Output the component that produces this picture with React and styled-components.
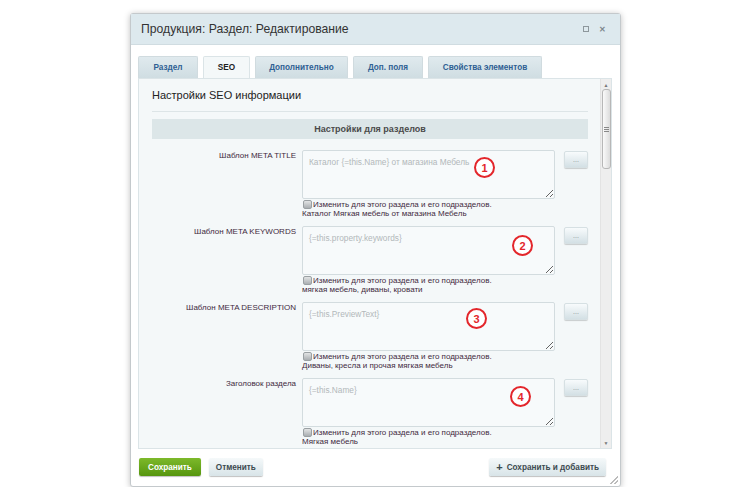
import React from "react";
import styled, { createGlobalStyle } from "styled-components";

const Global = createGlobalStyle`
  html, body { margin: 0; padding: 0; background: #fff; }
  body { font-family: "Liberation Sans", Arial, sans-serif; }
  * { box-sizing: border-box; }
`;

const rows = [
  {
    label: "Шаблон META TITLE",
    placeholder: "Каталог {=this.Name} от магазина Мебель",
    value: "Каталог Мягкая мебель от магазина Мебель",
    mark: 1, mx: 172, my: 7,
  },
  {
    label: "Шаблон META KEYWORDS",
    placeholder: "{=this.property.keywords}",
    value: "мягкая мебель, диваны, кровати",
    mark: 2, mx: 210, my: 9,
  },
  {
    label: "Шаблон META DESCRIPTION",
    placeholder: "{=this.PreviewText}",
    value: "Диваны, кресла и прочая мягкая мебель",
    mark: 3, mx: 164, my: 6,
  },
  {
    label: "Заголовок раздела",
    placeholder: "{=this.Name}",
    value: "Мягкая мебель",
    mark: 4, mx: 208, my: 8,
  },
];

const tabs = [
  { name: "Раздел", w: 60 },
  { name: "SEO", w: 47 },
  { name: "Дополнительно", w: 93 },
  { name: "Доп. поля", w: 70 },
  { name: "Свойства элементов", w: 114 },
];

export default function App() {
  return (
    <Page>
      <Global />
      <Dialog>
        <Header>
          <Title>Продукция: Раздел: Редактирование</Title>
          <HeaderIcons>
            <MaxIcon />
            <CloseIcon>✕</CloseIcon>
          </HeaderIcons>
        </Header>
        <Tabs>
          {tabs.map((t) => (
            <Tab key={t.name} $w={t.w} $active={t.name === "SEO"}>{t.name}</Tab>
          ))}
        </Tabs>
        <Panel>
          <Content>
            <Heading>Настройки SEO информации</Heading>
            <Band>Настройки для разделов</Band>
            {rows.map((r) => (
              <Row key={r.label}>
                <Label>{r.label}</Label>
                <Field>
                  <AreaWrap>
                    <Area placeholder={r.placeholder} />
                    <Mark style={{ left: r.mx, top: r.my }}>{r.mark}</Mark>
                  </AreaWrap>
                  <CheckLine>
                    <Check />
                    Изменить для этого раздела и его подразделов.
                  </CheckLine>
                  <Value>{r.value}</Value>
                </Field>
                <DotsButton>...</DotsButton>
              </Row>
            ))}
          </Content>
          <Scrollbar>
            <Arrow>▲</Arrow>
            <Thumb>
              <Grip />
            </Thumb>
            <Spacer />
            <Arrow>▼</Arrow>
          </Scrollbar>
        </Panel>
        <Footer>
          <Button $primary>Сохранить</Button>
          <Button>Отменить</Button>
          <Spacer />
          <Button><Plus>+</Plus>Сохранить и добавить</Button>
        </Footer>
        <Resize />
      </Dialog>
    </Page>
  );
}

const Page = styled.div`
  padding: 13px 0 0 130px;
`;

const Dialog = styled.div`
  position: relative;
  width: 491px;
  height: 474px;
  border: 1px solid #c4c9cc;
  border-radius: 3px;
  background: #fff;
  box-shadow: 0 1px 6px rgba(0, 0, 0, 0.25);
  display: flex;
  flex-direction: column;
`;

const Header = styled.div`
  height: 31px;
  flex: none;
  background: #dde9ee;
  border-bottom: 1px solid #d0dce1;
  display: flex;
  align-items: center;
  padding: 0 14px 0 10px;
`;

const Title = styled.div`
  font-size: 12.2px;
  color: #333;
  flex: 1;
`;

const HeaderIcons = styled.div`
  display: flex;
  align-items: center;
  gap: 10px;
`;

const MaxIcon = styled.span`
  width: 6px;
  height: 6px;
  border: 1px solid #8d979c;
`;

const CloseIcon = styled.span`
  font-size: 8px;
  color: #7f898e;
  font-weight: bold;
`;

const Tabs = styled.div`
  display: flex;
  gap: 5px;
  margin: 11px 0 0 7px;
  height: 22px;
  flex: none;
`;

const Tab = styled.div`
  width: ${(p) => p.$w}px;
  display: flex;
  align-items: center;
  justify-content: center;
  white-space: nowrap;
  font-size: 8.2px;
  font-weight: bold;
  color: ${(p) => (p.$active ? "#222" : "#2f5f93")};
  background: ${(p) =>
    p.$active ? "#f4f8f9" : "linear-gradient(#e0eaee, #cfdde2)"};
  border: 1px solid ${(p) => (p.$active ? "#dbe4e7" : "#d0dbdf")};
  border-bottom: none;
  border-radius: 2px 2px 0 0;
`;

const Panel = styled.div`
  margin: 0 8px 0 7px;
  height: 371px;
  flex: none;
  background: #f4f8f9;
  border: 1px solid #dbe4e7;
  display: flex;
  overflow: hidden;
`;

const Content = styled.div`
  flex: 1;
  padding: 0 12px 0 13px;
  overflow: hidden;
`;

const Heading = styled.div`
  font-size: 11px;
  line-height: 14px;
  color: #222;
  padding: 9px 0 9px;
  border-bottom: 1px solid #dde5e7;
`;

const Band = styled.div`
  margin-top: 7px;
  height: 20px;
  background: #dce6e8;
  color: #4a4a4a;
  font-size: 9px;
  font-weight: bold;
  display: flex;
  align-items: center;
  justify-content: center;
  margin-bottom: 11px;
`;

const Row = styled.div`
  display: flex;
  align-items: flex-start;
  margin-bottom: 7px;
`;

const Label = styled.div`
  width: 144px;
  text-align: right;
  font-size: 8px;
  line-height: 10px;
  padding-top: 1px;
  color: #3f2a40;
  margin-right: 6px;
`;

const Field = styled.div`
  width: 253px;
`;

const AreaWrap = styled.div`
  position: relative;
  height: 49px;
`;

const Area = styled.textarea`
  width: 253px;
  height: 49px;
  display: block;
  border: 1px solid #d3dcdf;
  border-radius: 2px;
  background: #f7fafb;
  padding: 6px;
  font-family: "Liberation Sans", Arial, sans-serif;
  font-size: 8.3px;
  &::placeholder { color: #b2b8ba; }
`;

const Mark = styled.div`
  position: absolute;
  width: 21px;
  height: 21px;
  border-radius: 50%;
  border: 2px solid #e3262b;
  background: #fff;
  color: #e3262b;
  font-size: 11px;
  font-weight: bold;
  display: flex;
  align-items: center;
  justify-content: center;
`;

const CheckLine = styled.div`
  display: flex;
  align-items: center;
  height: 10px;
  font-size: 8px;
  color: #3f2a40;
`;

const Check = styled.span`
  width: 9px;
  height: 9px;
  margin: 0 1px 0 1px;
  border: 1px solid #9aa0a3;
  border-radius: 2px;
  background: linear-gradient(#e2e4e5, #a9aeb1);
`;

const Value = styled.div`
  height: 10px;
  line-height: 10px;
  font-size: 8px;
  color: #3f2a40;
`;

const DotsButton = styled.div`
  margin: 1px 0 0 9px;
  width: 24px;
  height: 17px;
  border-radius: 2px;
  background: linear-gradient(#f8fbfc, #d3e0e5);
  border: 1px solid #d6e0e3;
  box-shadow: 0 1px 1px rgba(0, 0, 0, 0.18);
  color: #7f8a8e;
  font-size: 7px;
  display: flex;
  align-items: center;
  justify-content: center;
`;

const Scrollbar = styled.div`
  width: 11px;
  flex: none;
  background: #eeeeee;
  border-left: 1px solid #e3e3e3;
  display: flex;
  flex-direction: column;
  align-items: center;
  padding: 2px 0 1px;
`;

const Arrow = styled.div`
  font-size: 5px;
  color: #777;
  height: 8px;
  line-height: 8px;
`;

const Thumb = styled.div`
  width: 9px;
  height: 80px;
  border: 1px solid #b7b7b7;
  border-radius: 3px;
  background: linear-gradient(90deg, #fafafa, #dcdcdc);
  display: flex;
  align-items: center;
  justify-content: center;
`;

const Grip = styled.div`
  width: 5px;
  height: 5px;
  background: repeating-linear-gradient(#888 0 1px, transparent 1px 2px);
`;

const Spacer = styled.div`
  flex: 1;
`;

const Footer = styled.div`
  flex: 1;
  display: flex;
  align-items: flex-start;
  gap: 8px;
  padding: 9px 14px 0 8px;
`;

const Button = styled.div`
  height: 18px;
  padding: 0 ${(p) => (p.$primary ? "9px" : "7px")};
  display: flex;
  align-items: center;
  border-radius: 2px;
  font-size: 8.2px;
  font-weight: bold;
  color: ${(p) => (p.$primary ? "#fff" : "#3d4b50")};
  background: ${(p) =>
    p.$primary ? "linear-gradient(#7db92a, #56960f)" : "linear-gradient(#f5f9fa, #d8e4e8)"};
  box-shadow: 0 1px 1px rgba(0, 0, 0, 0.25);
`;

const Plus = styled.span`
  font-size: 11px;
  margin-right: 4px;
  color: #3d4b50;
`;

const Resize = styled.div`
  position: absolute;
  right: 2px;
  bottom: 2px;
  width: 8px;
  height: 8px;
  background: linear-gradient(135deg, transparent 50%, #bbb 50%, #bbb 60%, transparent 60%, transparent 75%, #bbb 75%, #bbb 85%, transparent 85%);
`;
